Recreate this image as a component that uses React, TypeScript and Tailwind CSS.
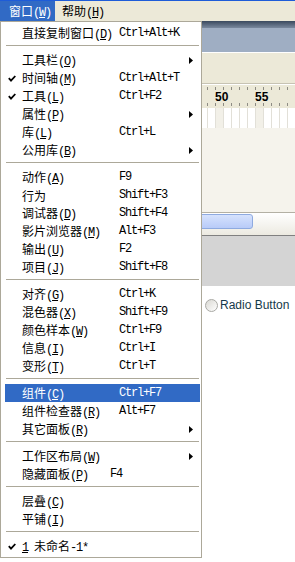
import React from "react";

const CJK = "font-['Noto_Sans_CJK_SC',sans-serif] text-[12px]";
const MONO = "font-['Liberation_Mono','Noto_Sans_CJK_SC',monospace] text-[12px] tracking-[-1.2px]";

type Entry =
  | {
      kind: "item";
      check?: boolean;
      cjk: string;
      mn?: string;
      sc?: string;
      arrow?: boolean;
      active?: boolean;
      scShift?: boolean;
      doc?: boolean;
    }
  | { kind: "sep" };

const entries: Entry[] = [
  { kind: "item", cjk: "直接复制窗口", mn: "D", sc: "Ctrl+Alt+K" },
  { kind: "sep" },
  { kind: "item", cjk: "工具栏", mn: "O", arrow: true },
  { kind: "item", check: true, cjk: "时间轴", mn: "M", sc: "Ctrl+Alt+T" },
  { kind: "item", check: true, cjk: "工具", mn: "L", sc: "Ctrl+F2" },
  { kind: "item", cjk: "属性", mn: "P", arrow: true },
  { kind: "item", cjk: "库", mn: "L", sc: "Ctrl+L" },
  { kind: "item", cjk: "公用库", mn: "B", arrow: true },
  { kind: "sep" },
  { kind: "item", cjk: "动作", mn: "A", sc: "F9" },
  { kind: "item", cjk: "行为", sc: "Shift+F3" },
  { kind: "item", cjk: "调试器", mn: "D", sc: "Shift+F4" },
  { kind: "item", cjk: "影片浏览器", mn: "M", sc: "Alt+F3" },
  { kind: "item", cjk: "输出", mn: "U", sc: "F2" },
  { kind: "item", cjk: "项目", mn: "J", sc: "Shift+F8" },
  { kind: "sep" },
  { kind: "item", cjk: "对齐", mn: "G", sc: "Ctrl+K" },
  { kind: "item", cjk: "混色器", mn: "X", sc: "Shift+F9" },
  { kind: "item", cjk: "颜色样本", mn: "W", sc: "Ctrl+F9" },
  { kind: "item", cjk: "信息", mn: "I", sc: "Ctrl+I" },
  { kind: "item", cjk: "变形", mn: "T", sc: "Ctrl+T" },
  { kind: "sep" },
  { kind: "item", cjk: "组件", mn: "C", sc: "Ctrl+F7", active: true },
  { kind: "item", cjk: "组件检查器", mn: "R", sc: "Alt+F7" },
  { kind: "item", cjk: "其它面板", mn: "R", arrow: true },
  { kind: "sep" },
  { kind: "item", cjk: "工作区布局", mn: "W", arrow: true },
  { kind: "item", cjk: "隐藏面板", mn: "P", sc: "F4", scShift: true },
  { kind: "sep" },
  { kind: "item", cjk: "层叠", mn: "C" },
  { kind: "item", cjk: "平铺", mn: "I" },
  { kind: "sep" },
  { kind: "item", check: true, cjk: "未命名", doc: true },
];

function Check() {
  return (
    <svg width="8" height="7" viewBox="0 0 8 7">
      <path d="M0.8 3.2 L3 5.6 L7.3 1" stroke="currentColor" strokeWidth="1.8" fill="none" />
    </svg>
  );
}

function Arrow() {
  return (
    <svg width="4" height="7" viewBox="0 0 4 7">
      <path d="M0 0 L4 3.5 L0 7Z" fill="currentColor" />
    </svg>
  );
}

function Label({ cjk, mn }: { cjk: string; mn?: string }) {
  return (
    <span className="whitespace-nowrap">
      <span className={CJK}>{cjk}</span>
      {mn && (
        <span className={MONO}>
          (<span className="underline underline-offset-[1px]">{mn}</span>)
        </span>
      )}
    </span>
  );
}

function MenuRow({ e }: { e: Extract<Entry, { kind: "item" }> }) {
  return (
    <div
      className={`flex h-[18px] items-center leading-[18px] ${
        e.active ? "bg-[#316AC5] text-white" : "text-black"
      }`}
    >
      <div className="flex w-[17px] shrink-0 items-center pl-[3px]">{e.check && <Check />}</div>
      <div className="w-[97px] shrink-0 whitespace-nowrap">
        {e.doc ? (
          <span className="whitespace-nowrap">
            <span className={MONO}>
              <span className="underline underline-offset-[1px]">1</span>{" "}
            </span>
            <span className={CJK}>未命名</span>
            <span className={MONO}>-1*</span>
          </span>
        ) : (
          <Label cjk={e.cjk} mn={e.mn} />
        )}
      </div>
      <div className={`flex-1 whitespace-nowrap ${MONO} ${e.scShift ? "-ml-[9px]" : ""}`}>{e.sc}</div>
      <div className="flex w-[11px] shrink-0 items-center">{e.arrow && <Arrow />}</div>
    </div>
  );
}

function Dropdown() {
  return (
    <div className="absolute left-0 top-[21px] h-[537px] w-[202px] border border-[#ACA899] bg-white pb-[2px] pl-[4px] pr-[1px] pt-[2px]">
      {entries.map((e, i) =>
        e.kind === "sep" ? (
          <div key={i} className="h-[9px] px-[1px] pt-[3px]">
            <div className="h-px bg-[#ACA899]" />
          </div>
        ) : (
          <MenuRow key={i} e={e} />
        )
      )}
    </div>
  );
}

function Ruler() {
  const cells = Array.from({ length: 37 });
  return (
    <div className="flex h-[23px] bg-[#ECE9D8] pl-[7px]">
      {cells.map((_, i) => (
        <div key={i} className="flex w-[8px] shrink-0 flex-col justify-between pb-[2px] pt-[2px]">
          <div className="h-[3px] w-px bg-[#8E8C84]" />
          <div className="h-[12px] whitespace-nowrap font-['Liberation_Sans',sans-serif] text-[12px] font-bold leading-[12px] text-black">
            {i === 26 ? "50" : i === 31 ? "55" : ""}
          </div>
          <div className="h-[3px] w-px bg-[#8E8C84]" />
        </div>
      ))}
    </div>
  );
}

function Frames() {
  const cells = Array.from({ length: 37 });
  return (
    <div className="flex h-[20px] bg-white pl-[7px]">
      {cells.map((_, i) => (
        <div
          key={i}
          className={`h-full w-[8px] shrink-0 border-l border-[#E2E0D8] ${
            i === 26 || i === 31 ? "bg-[#F2F0E8]" : "bg-white"
          }`}
        />
      ))}
    </div>
  );
}

export default function App() {
  return (
    <div className="relative h-[562px] w-[295px] overflow-hidden bg-white">
      <div className="h-px bg-[#1E5CD8]" />
      <div className="flex h-[20px] bg-[#ECE9D8] leading-[20px]">
        <div className="flex w-[55px] items-center bg-[#316AC5] pl-[9px] text-white">
          <Label cjk="窗口" mn="W" />
        </div>
        <div className="flex items-center pl-[7px] text-black">
          <Label cjk="帮助" mn="H" />
        </div>
      </div>
      <div className="h-[7px] bg-gradient-to-b from-[#3B4A5E] to-[#7A899E]" />
      <div className="h-[24px] bg-[#9FAEC3]" />
      <div className="h-px bg-white" />
      <div className="h-[30px] bg-[#ECE9D8]" />
      <div className="h-px bg-[#C7C3B3]" />
      <div className="h-px bg-white" />
      <Ruler />
      <Frames />
      <div className="h-[84px] bg-[#F5F3EC]" />
      <div className="h-px bg-[#B3B0A4]" />
      <div className="h-[22px] bg-gradient-to-b from-white to-[#ECEAE1] pt-px">
        <div className="h-[15px] w-[253px] rounded-r-[3px] border border-[#8EAAE0] bg-gradient-to-b from-[#D6E2FD] to-[#B8CBF8]" />
      </div>
      <div className="h-px bg-[#808080]" />
      <div className="h-[50px] bg-[#D4D4D4]" />
      <div className="flex items-center gap-[2px] pl-[205px] pt-[12px]">
        <div className="h-[13px] w-[13px] rounded-full border border-[#A9A9A4] bg-gradient-to-br from-[#D9D8D2] to-white" />
        <span className="whitespace-nowrap font-['Liberation_Sans',sans-serif] text-[12px] leading-[14px] text-[#15394A]">
          Radio Button
        </span>
      </div>
      <Dropdown />
    </div>
  );
}
